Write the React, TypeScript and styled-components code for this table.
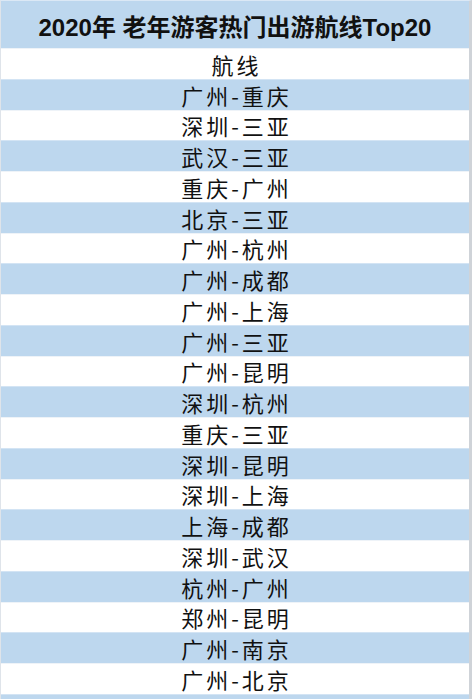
import React from "react";
import styled, { createGlobalStyle } from "styled-components";

const Global = createGlobalStyle`
  html, body {
    margin: 0;
    padding: 0;
    background: #ffffff;
    overflow: hidden;
    height: 699px;
  }
  #root { height: 699px; overflow: hidden; }
`;

const Table = styled.div`
  width: 472px;
  height: 699px;
  box-sizing: border-box;
  border-left: 1px solid #dfe4ea;
  border-right: 3px solid #cfd3d8;
  border-top: 1px solid #dbe8f5;
  display: flex;
  flex-direction: column;
  overflow: hidden;
`;

const Header = styled.div`
  flex: 0 0 47px;
  background: #bdd7ee;
  display: flex;
  align-items: center;
  justify-content: center;
  font-family: "Liberation Sans", "Noto Sans CJK SC", sans-serif;
  font-weight: 700;
  font-size: 24px;
  color: #111;
  box-sizing: border-box;
  padding-top: 1px;
`;

const Row = styled.div<{ $blue: boolean }>`
  flex: 0 0 30.75px;
  box-sizing: border-box;
  background: ${(p) => (p.$blue ? "#bdd7ee" : "#ffffff")};
  border-top: 1px solid ${(p) => (p.$blue ? "#d3e4f4" : "#eef3f8")};
  display: flex;
  align-items: center;
  justify-content: center;
  padding-left: 3px;
  font-family: "Noto Sans CJK SC", "Liberation Sans", sans-serif;
  font-size: 22px;
  letter-spacing: 3px;
  color: #111111;
  line-height: 1;
`;

const routes = [
  "航线",
  "广州-重庆",
  "深圳-三亚",
  "武汉-三亚",
  "重庆-广州",
  "北京-三亚",
  "广州-杭州",
  "广州-成都",
  "广州-上海",
  "广州-三亚",
  "广州-昆明",
  "深圳-杭州",
  "重庆-三亚",
  "深圳-昆明",
  "深圳-上海",
  "上海-成都",
  "深圳-武汉",
  "杭州-广州",
  "郑州-昆明",
  "广州-南京",
  "广州-北京",
  "",
];

export default function App() {
  return (
    <>
      <Global />
      <Table>
        <Header>2020年 老年游客热门出游航线Top20</Header>
        {routes.map((r, i) => (
          <Row key={i} $blue={i % 2 === 1}>
            {r}
          </Row>
        ))}
      </Table>
    </>
  );
}
